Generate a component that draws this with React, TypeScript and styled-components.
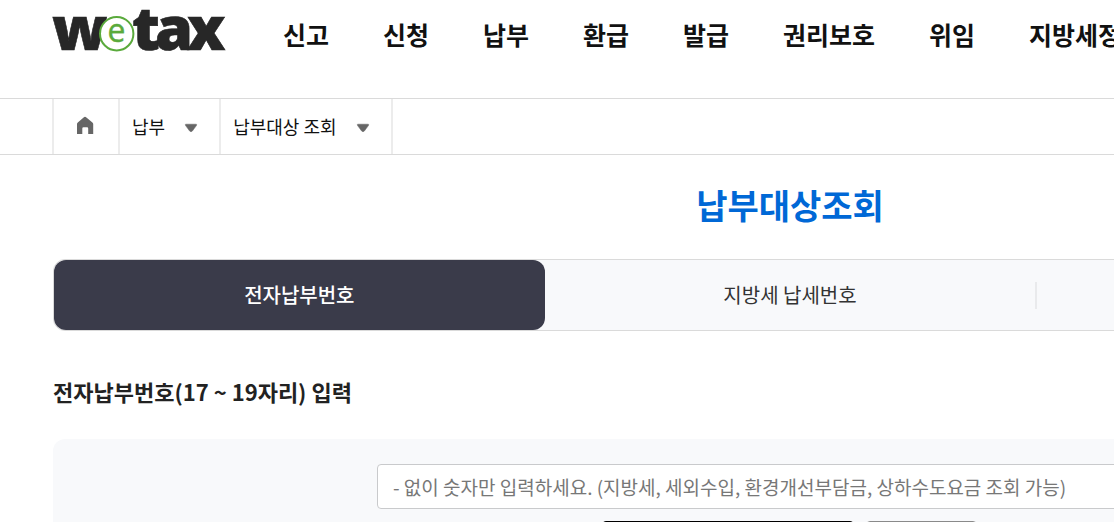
import React from 'react';
import styled, { createGlobalStyle } from 'styled-components';

const GlobalStyle = createGlobalStyle`
  *, *::before, *::after { box-sizing: border-box; }
  html { overflow: hidden; }
  body {
    margin: 0;
    background: #fff;
    color: #1d1d1d;
    font-family: "Noto Sans CJK KR", "Noto Sans", sans-serif;
  }
  h1, h2, ul, ol { margin: 0; padding: 0; }
  ul, ol { list-style: none; }
  a { color: inherit; text-decoration: none; }
  button, input { font-family: inherit; }
`;

const Page = styled.div`
  min-width: 1580px;
`;

const Header = styled.header`
  display: flex;
  align-items: flex-start;
  height: 98px;
  padding: 0 53px;
`;

const LogoLink = styled.a`
  display: block;
  width: 173px;
  height: 60px;
  margin-right: 57px;

  svg { display: block; overflow: visible; }
`;

const Menu = styled.ul`
  display: flex;
  gap: 54px;
  padding-top: 16px;
`;

const MenuLink = styled.a`
  display: block;
  font-size: 25px;
  font-weight: 700;
  line-height: 36px;
  white-space: nowrap;
  color: #111;
`;

const Crumbs = styled.nav`
  padding: 0 52px;
  border-top: 1px solid #dadada;
  border-bottom: 1px solid #dadada;
`;

const CrumbList = styled.ol`
  display: flex;
  height: 55px;
  border-left: 2px solid #ececec;
`;

const Crumb = styled.li`
  display: flex;
  border-right: 2px solid #ececec;
`;

const HomeLink = styled.a`
  display: flex;
  align-items: center;
  padding: 0 24px 2px 22px;
`;

const CrumbButton = styled.button`
  display: flex;
  align-items: center;
  gap: 19px;
  padding: 0 21px 2px 12px;
  border: 0;
  background: none;
  color: #111;
  font-size: 18px;
  line-height: 24px;
  white-space: nowrap;

  svg { margin-top: 4px; }
`;

const Main = styled.main`
  padding: 26px 53px 0;
`;

const Title = styled.h1`
  color: #0068d6;
  font-size: 34px;
  font-weight: 700;
  line-height: 48px;
  text-align: center;
`;

const Tabs = styled.div`
  display: flex;
  height: 72px;
  margin-top: 30px;
  border: 1px solid #dadada;
  border-radius: 12px;
  background: #f8f9fb;
`;

const Tab = styled.button<{ $active?: boolean; $divided?: boolean }>`
  flex: 1;
  display: flex;
  align-items: center;
  justify-content: center;
  position: relative;
  padding: 0;
  border: 0;
  border-radius: 12px;
  background: ${(p) => (p.$active ? '#3a3b4a' : 'transparent')};
  color: ${(p) => (p.$active ? '#fff' : '#333')};
  font-size: 20px;
  font-weight: ${(p) => (p.$active ? 500 : 400)};
  line-height: 28px;

  &::after {
    content: "";
    display: ${(p) => (p.$divided ? 'block' : 'none')};
    position: absolute;
    right: -2px;
    width: 2px;
    height: 27px;
    background: #e9eaec;
  }
`;

const SectionTitle = styled.h2`
  margin-top: 44px;
  font-size: 22px;
  font-weight: 700;
  line-height: 32px;
  color: #222;
`;

const SearchForm = styled.form`
  display: flex;
  flex-direction: column;
  align-items: center;
  margin-top: 32px;
  padding: 25px 24px;
  border-radius: 12px;
  background: #f8f9fb;
`;

const NumberInput = styled.input`
  width: 100%;
  max-width: 826px;
  height: 45px;
  padding: 0 15px;
  border: 1px solid #c9cacc;
  border-radius: 4px;
  background: #fff;
  color: #222;
  font-size: 19px;

  &::placeholder { color: #777; opacity: 1; }
`;

const Actions = styled.div`
  display: flex;
  gap: 12px;
  margin: 12px 2px 0 0;
`;

const ActionButton = styled.button<{ $primary?: boolean }>`
  width: ${(p) => (p.$primary ? 252 : 111)}px;
  height: 50px;
  border: 1px solid ${(p) => (p.$primary ? '#000' : '#8a8a8a')};
  border-radius: 4px;
  background: ${(p) => (p.$primary ? '#000' : '#fff')};
`;

const Logo = () => (
  <svg width="173" height="60" viewBox="0 0 173 60" role="img" aria-label="wetax">
    <g fontFamily='"Noto Sans", "Open Sans", sans-serif' fontWeight="900" fontSize="61" fill="#272727" stroke="#272727" strokeWidth="0.6">
      <text x="-1" y="50">w</text>
      <text x="79" y="50">t</text>
      <text x="102" y="50">a</text>
      <text x="134" y="50">x</text>
    </g>
    <circle cx="63.7" cy="33.7" r="16.7" fill="#fff" stroke="#5aaa3c" strokeWidth="2" />
    <text x="63.5" y="41.5" textAnchor="middle" fontFamily='"Open Sans", sans-serif' fontSize="32" fontWeight="500" fill="#5aaa3c" stroke="#5aaa3c" strokeWidth="0.4">e</text>
  </svg>
);

const HomeIcon = () => (
  <svg width="18" height="19" viewBox="0 0 18 19" aria-hidden="true">
    <path d="M9 0.8 Q9.6 0.8 10.4 1.5 L16.4 6.4 Q17.2 7 17.2 8 V18 H12.2 V12.5 Q12.2 11.3 11 11.3 H7.5 Q6.3 11.3 6.3 12.5 V18 H1 V8 Q1 7 1.8 6.4 L7.6 1.5 Q8.4 0.8 9 0.8 Z" fill="#666" />
  </svg>
);

const Caret = () => (
  <svg width="14" height="10" viewBox="0 0 14 10" aria-hidden="true">
    <path d="M1.6 1.2 H12.4 Q13 1.6 12.4 2.6 L8.4 8 Q7 9.6 5.6 8 L1.6 2.6 Q1 1.6 1.6 1.2 Z" fill="#666" stroke="#666" strokeWidth="0.5" strokeLinejoin="round" />
  </svg>
);

const menu = ['신고', '신청', '납부', '환급', '발급', '권리보호', '위임', '지방세정보'];

export default function App() {
  return (
    <>
      <GlobalStyle />
      <Page>
        <Header>
          <LogoLink href="#"><Logo /></LogoLink>
          <nav>
            <Menu>
              {menu.map((label) => (
                <li key={label}><MenuLink href="#">{label}</MenuLink></li>
              ))}
            </Menu>
          </nav>
        </Header>
        <Crumbs>
          <CrumbList>
            <Crumb><HomeLink href="#" aria-label="홈"><HomeIcon /></HomeLink></Crumb>
            <Crumb><CrumbButton type="button">납부<Caret /></CrumbButton></Crumb>
            <Crumb><CrumbButton type="button">납부대상 조회<Caret /></CrumbButton></Crumb>
          </CrumbList>
        </Crumbs>
        <Main>
          <Title>납부대상조회</Title>
          <Tabs role="tablist">
            <Tab type="button" role="tab" aria-selected $active>전자납부번호</Tab>
            <Tab type="button" role="tab" aria-selected={false} $divided>지방세 납세번호</Tab>
            <Tab type="button" role="tab" aria-selected={false} aria-label="납세자" />
          </Tabs>
          <SectionTitle id="number-title">전자납부번호(17 ~ 19자리) 입력</SectionTitle>
          <SearchForm onSubmit={(e) => e.preventDefault()}>
            <NumberInput
              type="text"
              inputMode="numeric"
              aria-labelledby="number-title"
              placeholder="- 없이 숫자만 입력하세요. (지방세, 세외수입, 환경개선부담금, 상하수도요금 조회 가능)"
            />
            <Actions>
              <ActionButton type="submit" $primary aria-label="조회" />
              <ActionButton type="reset" aria-label="초기화" />
            </Actions>
          </SearchForm>
        </Main>
      </Page>
    </>
  );
}
